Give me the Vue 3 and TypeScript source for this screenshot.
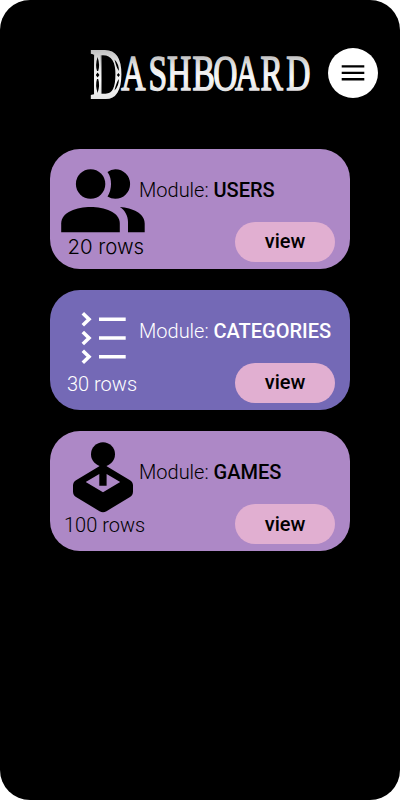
<script setup lang="ts">
interface Module {
  id: 'users' | 'categories' | 'games'
  name: string
  rows: number
}

const modules: Module[] = [
  { id: 'users', name: 'USERS', rows: 20 },
  { id: 'categories', name: 'CATEGORIES', rows: 30 },
  { id: 'games', name: 'GAMES', rows: 100 },
]
</script>

<template>
  <main class="screen">
    <header class="header">
      <svg class="title" viewBox="-2 -10 234 90" role="img" aria-label="Dashboard">
        <defs>
          <linearGradient id="silver" x1="0" y1="0" x2="0" y2="1">
            <stop offset="0.1" stop-color="#aaa" />
            <stop offset="0.35" stop-color="#e2e2e2" />
            <stop offset="0.6" stop-color="#fafafa" />
            <stop offset="0.9" stop-color="#ddd" />
          </linearGradient>
        </defs>
        <path class="stem" d="M1 6.5H13L11.5 10V50L13 53.5H1L4 50V10Z" />
        <text class="initial" transform="scale(.62 1)" x="0.5" y="53">D</text>
        <g class="ornament">
          <path d="M7.6 12Q10.2 20 8.2 26H7Q5 20 7.6 12ZM7.6 48Q10.2 40 8.2 34H7Q5 40 7.6 48Z" />
          <path d="M7.6 27.6l1.8 2.4-1.8 2.4-1.8-2.4ZM28.4 28l1.5 2-1.5 2-1.5-2Z" />
          <path d="M24.5 14.5Q29 19 28.9 26Q26.5 23 24.5 14.5ZM24.5 45.5Q29 41 28.9 34Q26.5 37 24.5 45.5Z" />
        </g>
        <text
          class="letters"
          transform="scale(.67 1)"
          x="46.5 87.5 115 153 184 216.5 254.5 293"
          y="44.7"
        >ASHBOARD</text>
      </svg>
      <button class="menu" type="button" aria-label="Menu">
        <svg width="24" height="18" viewBox="0 0 24 18">
          <path d="M.7 2.4h22.6M.7 8.9h22.6M.7 15.2h22.6" stroke="#000" stroke-width="2.4" />
        </svg>
      </button>
    </header>

    <section class="modules">
      <article v-for="item in modules" :key="item.id" class="card" :class="item.id">
        <div class="summary">
          <svg v-if="item.id === 'users'" class="icon" viewBox="50 149 89 86">
            <circle cx="90.6" cy="184" r="14.7" />
            <path d="M107.5 172Q111 177 111 184T107.5 196.4Q111 198.8 115.3 198.8A14.8 14.8 0 0 0 115.3 169.2Q111 169.2 107.5 172Z" />
            <path d="M61.2 232.2V223.5C61.2 212 77 207 90.6 207S119.8 212 119.8 223.5V232.2Z" />
            <path d="M119.8 207C125 210 128 216 128 222V232.2H144.7V223.5C144.7 213 132.5 208 119.8 207Z" />
          </svg>
          <svg v-else-if="item.id === 'categories'" class="icon" viewBox="50 290 89 82">
            <path
              d="M82.8 313.2l6.2 6-6.2 6M82.8 332l6.2 6-6.2 6M82.8 350.8l6.2 6-6.2 6M99 319.2h26.7M99 338h26.7M99 356.8h26.7"
              fill="none"
              stroke="#fff"
              stroke-width="3.6"
            />
          </svg>
          <svg v-else class="icon" viewBox="50 431 89 82">
            <circle cx="103" cy="454.3" r="12" />
            <path
              fill-rule="evenodd"
              d="M99.3 463H106.7V466.3L130 480.2Q133 482 133 485.5V491.5Q133 495 130 497L106.5 511.2Q103 513.3 99.5 511.2L76 497Q73 495 73 491.5V485.5Q73 482 76 480.2L99.3 466.3ZM99.3 474.1L85.7 482.1 103 492.2 120.2 482.1 106.6 474.1V485.7H99.3Z"
            />
          </svg>
          <p class="rows">{{ item.rows }} rows</p>
        </div>
        <div class="details">
          <h2 class="label">Module: <strong>{{ item.name }}</strong></h2>
          <button class="view" type="button">view</button>
        </div>
      </article>
    </section>
  </main>
</template>

<style>
body {
  background: #fff;
}
</style>

<style scoped>
.screen {
  box-sizing: border-box;
  width: 400px;
  height: 800px;
  padding-top: 35px;
  border-radius: 30px;
  background: #000;
  font-family: Roboto, sans-serif;
  overflow: hidden;
}

.header {
  display: flex;
  align-items: flex-start;
  height: 70px;
  padding-left: 88px;
}

.title {
  flex: none;
  width: 234px;
  height: 90px;
}

.initial,
.letters {
  fill: url(#silver);
  stroke: url(#silver);
  font-family: "Liberation Serif", serif;
}

.initial {
  font-size: 72px;
  stroke-width: 2.2px;
}

.letters {
  font-size: 50px;
  stroke-width: 1.6px;
}

.stem {
  fill: url(#silver);
}

.ornament {
  fill: #000;
}

.menu {
  display: flex;
  flex: none;
  align-items: center;
  justify-content: center;
  width: 50px;
  height: 50px;
  margin: 13px 0 0 6px;
  padding: 0;
  border: 0;
  border-radius: 50%;
  background: #fff;
}

.modules {
  display: flex;
  flex-direction: column;
  gap: 21px;
  padding: 44px 50px 0;
}

.card {
  display: flex;
  height: 120px;
  border-radius: 30px;
  background: #ad88c6;
  color: #000;
}

.categories {
  background: #7469b6;
  color: #fff;
}

.summary {
  width: 89px;
}

.icon {
  display: block;
  width: 89px;
  height: 82px;
  overflow: visible;
}

.users .icon {
  height: 86px;
}

.rows {
  margin: 0;
  padding-left: 17px;
  font-size: 20px;
  font-weight: 300;
  line-height: 24px;
  white-space: nowrap;
}

.users .rows {
  padding-left: 17.4px;
  font-family: Inter, sans-serif;
  font-size: 20.4px;
}

.games .rows {
  padding-left: 14px;
}

.details {
  display: flex;
  flex: 1;
  flex-direction: column;
  gap: 20px;
  padding: 29px 15px 0 0;
}

.label {
  margin: 0;
  font-size: 20px;
  font-weight: 300;
  line-height: 24px;
  white-space: nowrap;
}

.label strong {
  font-weight: 500;
}

.view {
  align-self: flex-end;
  width: 100px;
  height: 40px;
  padding: 0 0 2px;
  border: 0;
  border-radius: 20px;
  background: #e1afd1;
  color: #000;
  font-family: inherit;
  font-size: 20px;
  font-weight: 500;
}

.games .view {
  padding-bottom: 0;
}
</style>
